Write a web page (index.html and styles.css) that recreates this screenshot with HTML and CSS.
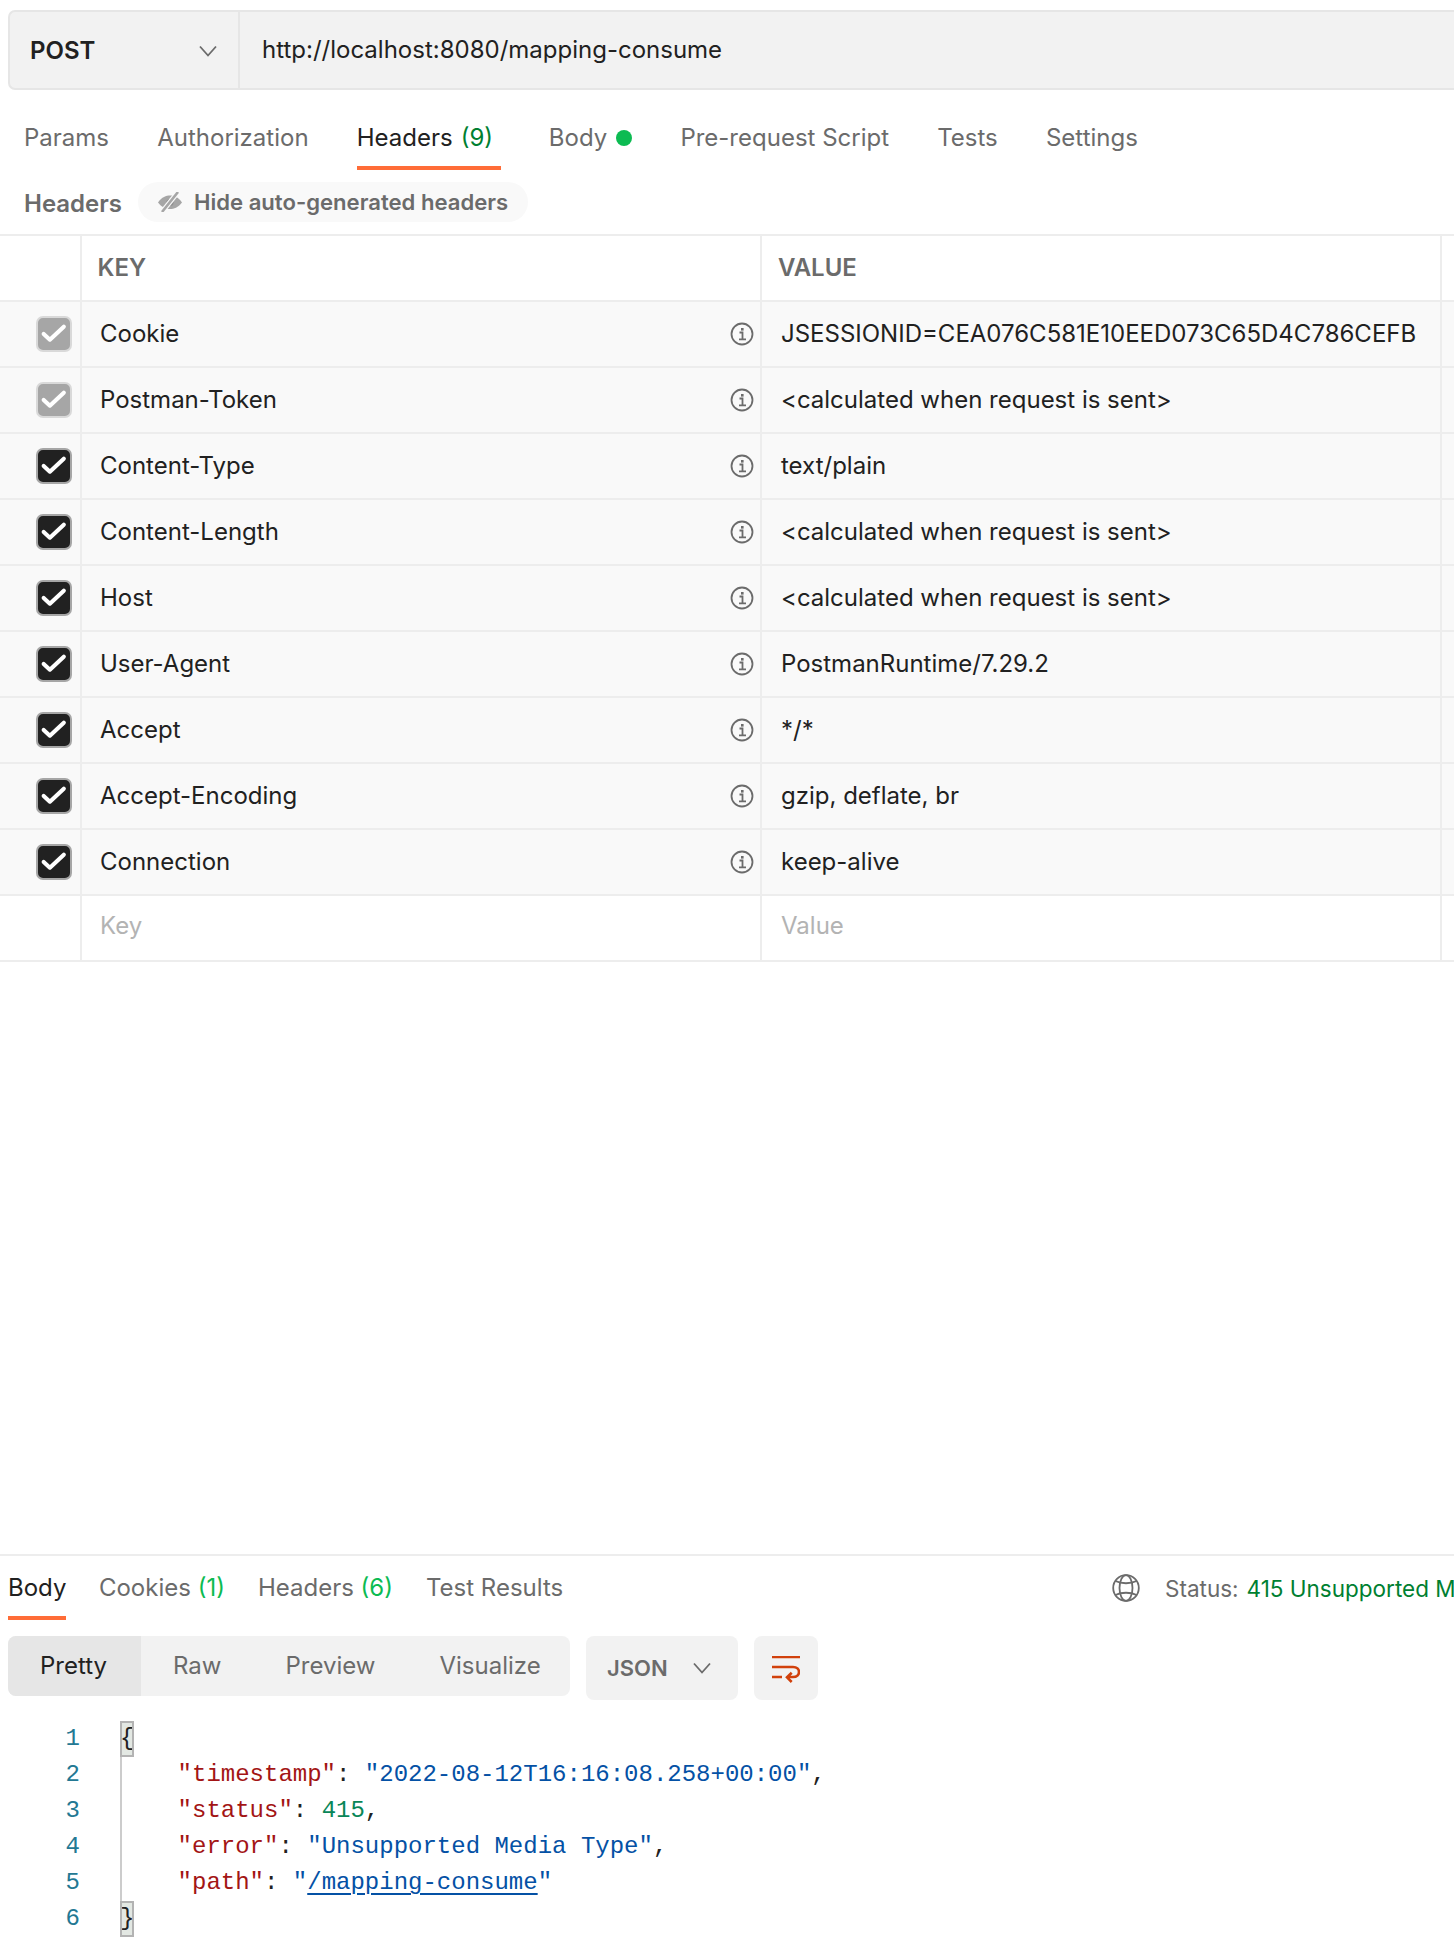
FILE: index.html
```html
<!DOCTYPE html>
<html lang="en">
<head>
<meta charset="utf-8">
<title>Postman request</title>
<link rel="stylesheet" href="styles.css">
</head>
<body>
<div class="app">
  <section class="request">
    <div class="urlbar">
      <div class="method"><span>POST</span>
        <svg class="chev" viewBox="0 0 18 12"><path d="M1 1.5 9 10.5 17 1.5"/></svg>
      </div>
      <div class="url">http://localhost:8080/mapping-consume</div>
    </div>
    <nav class="tabs">
      <div class="tab">Params</div>
      <div class="tab">Authorization</div>
      <div class="tab active">Headers <span class="count">(9)</span></div>
      <div class="tab body-tab">Body <i class="dot"></i></div>
      <div class="tab">Pre-request Script</div>
      <div class="tab">Tests</div>
      <div class="tab">Settings</div>
    </nav>
    <div class="subhead">
      <span class="subtitle">Headers</span>
      <div class="pill">
        <svg class="eye" viewBox="0 0 24 20"><path class="lid" d="M0 10.500C4 5 8 3.500 12 3.500s8 1.500 12 7c-4 5-8 6.500-12 6.500S4 15.500 0 10.500Z"/><circle class="pupil" cx="12" cy="10.500" r="3.600"/><path class="halo" d="M20 0 4 20"/><path class="slash" d="M20 0 4 20"/></svg>
        <span>Hide auto-generated headers</span>
      </div>
    </div>
    <div class="table">
      <div class="row head"><div class="c check"></div><div class="c key">KEY</div><div class="c val">VALUE</div><div class="c rest"></div></div>

      <div class="row filled"><div class="c check"><span class="box off"><svg viewBox="2 2 31 31"><path d="M7.500 17.500 13.500 23 27 10.500"/></svg></span></div><div class="c key"><span>Cookie</span><svg class="info" viewBox="0 0 24 24"><circle cx="12" cy="12" r="10.500"/><path d="M9.500 10.500H12.500V17M9 17.300H16"/><rect x="11" y="6" width="2.600" height="2.600"/></svg></div><div class="c val">JSESSIONID=CEA076C581E10EED073C65D4C786CEFB</div><div class="c rest"></div></div>

      <div class="row filled"><div class="c check"><span class="box off"><svg viewBox="2 2 31 31"><path d="M7.500 17.500 13.500 23 27 10.500"/></svg></span></div><div class="c key"><span>Postman-Token</span><svg class="info" viewBox="0 0 24 24"><circle cx="12" cy="12" r="10.500"/><path d="M9.500 10.500H12.500V17M9 17.300H16"/><rect x="11" y="6" width="2.600" height="2.600"/></svg></div><div class="c val">&lt;calculated when request is sent&gt;</div><div class="c rest"></div></div>

      <div class="row filled"><div class="c check"><span class="box"><svg viewBox="2 2 31 31"><path d="M7.500 17.500 13.500 23 27 10.500"/></svg></span></div><div class="c key"><span>Content-Type</span><svg class="info" viewBox="0 0 24 24"><circle cx="12" cy="12" r="10.500"/><path d="M9.500 10.500H12.500V17M9 17.300H16"/><rect x="11" y="6" width="2.600" height="2.600"/></svg></div><div class="c val">text/plain</div><div class="c rest"></div></div>

      <div class="row filled"><div class="c check"><span class="box"><svg viewBox="2 2 31 31"><path d="M7.500 17.500 13.500 23 27 10.500"/></svg></span></div><div class="c key"><span>Content-Length</span><svg class="info" viewBox="0 0 24 24"><circle cx="12" cy="12" r="10.500"/><path d="M9.500 10.500H12.500V17M9 17.300H16"/><rect x="11" y="6" width="2.600" height="2.600"/></svg></div><div class="c val">&lt;calculated when request is sent&gt;</div><div class="c rest"></div></div>

      <div class="row filled"><div class="c check"><span class="box"><svg viewBox="2 2 31 31"><path d="M7.500 17.500 13.500 23 27 10.500"/></svg></span></div><div class="c key"><span>Host</span><svg class="info" viewBox="0 0 24 24"><circle cx="12" cy="12" r="10.500"/><path d="M9.500 10.500H12.500V17M9 17.300H16"/><rect x="11" y="6" width="2.600" height="2.600"/></svg></div><div class="c val">&lt;calculated when request is sent&gt;</div><div class="c rest"></div></div>

      <div class="row filled"><div class="c check"><span class="box"><svg viewBox="2 2 31 31"><path d="M7.500 17.500 13.500 23 27 10.500"/></svg></span></div><div class="c key"><span>User-Agent</span><svg class="info" viewBox="0 0 24 24"><circle cx="12" cy="12" r="10.500"/><path d="M9.500 10.500H12.500V17M9 17.300H16"/><rect x="11" y="6" width="2.600" height="2.600"/></svg></div><div class="c val">PostmanRuntime/7.29.2</div><div class="c rest"></div></div>

      <div class="row filled"><div class="c check"><span class="box"><svg viewBox="2 2 31 31"><path d="M7.500 17.500 13.500 23 27 10.500"/></svg></span></div><div class="c key"><span>Accept</span><svg class="info" viewBox="0 0 24 24"><circle cx="12" cy="12" r="10.500"/><path d="M9.500 10.500H12.500V17M9 17.300H16"/><rect x="11" y="6" width="2.600" height="2.600"/></svg></div><div class="c val">*/*</div><div class="c rest"></div></div>

      <div class="row filled"><div class="c check"><span class="box"><svg viewBox="2 2 31 31"><path d="M7.500 17.500 13.500 23 27 10.500"/></svg></span></div><div class="c key"><span>Accept-Encoding</span><svg class="info" viewBox="0 0 24 24"><circle cx="12" cy="12" r="10.500"/><path d="M9.500 10.500H12.500V17M9 17.300H16"/><rect x="11" y="6" width="2.600" height="2.600"/></svg></div><div class="c val">gzip, deflate, br</div><div class="c rest"></div></div>

      <div class="row filled"><div class="c check"><span class="box"><svg viewBox="2 2 31 31"><path d="M7.500 17.500 13.500 23 27 10.500"/></svg></span></div><div class="c key"><span>Connection</span><svg class="info" viewBox="0 0 24 24"><circle cx="12" cy="12" r="10.500"/><path d="M9.500 10.500H12.500V17M9 17.300H16"/><rect x="11" y="6" width="2.600" height="2.600"/></svg></div><div class="c val">keep-alive</div><div class="c rest"></div></div>

      <div class="row blank"><div class="c check"></div><div class="c key">Key</div><div class="c val">Value</div><div class="c rest"></div></div>
    </div>
  </section>

  <section class="response">
    <div class="restabs">
      <div class="rtab active">Body</div>
      <div class="rtab">Cookies <span class="count bright">(1)</span></div>
      <div class="rtab">Headers <span class="count bright">(6)</span></div>
      <div class="rtab">Test Results</div>
      <div class="status">
        <svg class="globe" viewBox="0 0 28 28"><circle cx="14" cy="14" r="12.800"/><ellipse cx="14" cy="14" rx="6.500" ry="12.800"/><path d="M3.500 7C9 10 19 10 24.500 7M3.500 21C9 18 19 18 24.500 21"/></svg>
        <span class="stlabel">Status:</span>
        <span class="stvalue">415 Unsupported Media Type</span>
      </div>
    </div>
    <div class="tools">
      <div class="seg">
        <div class="opt on">Pretty</div>
        <div class="opt">Raw</div>
        <div class="opt">Preview</div>
        <div class="opt">Visualize</div>
      </div>
      <div class="lang"><span>JSON</span>
        <svg class="chev" viewBox="0 0 18 12"><path d="M1 1.5 9 10.500 17 1.500"/></svg>
      </div>
      <div class="wrapbtn">
        <svg viewBox="0 0 28 27"><path d="M0 1H28M0 11H21C29 11 29 21 21 21H15M19.700 16.700 15 21.300 19.700 26M0 21H10"/></svg>
      </div>
    </div>
    <div class="code">
      <div class="line"><span class="ln">1</span><span class="src"><span class="brace">{</span></span></div>
      <div class="line"><span class="ln">2</span><span class="src"><span class="guide"></span><span class="k">"timestamp"</span>: <span class="s">"2022-08-12T16:16:08.258+00:00"</span>,</span></div>
      <div class="line"><span class="ln">3</span><span class="src"><span class="guide"></span><span class="k">"status"</span>: <span class="n">415</span>,</span></div>
      <div class="line"><span class="ln">4</span><span class="src"><span class="guide"></span><span class="k">"error"</span>: <span class="s">"Unsupported Media Type"</span>,</span></div>
      <div class="line"><span class="ln">5</span><span class="src"><span class="guide"></span><span class="k">"path"</span>: <span class="s">"<span class="link">/mapping-consume</span>"</span></span></div>
      <div class="line"><span class="ln">6</span><span class="src"><span class="brace">}</span></span></div>
    </div>
  </section>
</div>
</body>
</html>
```
FILE: styles.css
```css
* { box-sizing: border-box; }
html, body { margin: 0; padding: 0; background: #fff; }
body { font-family: Inter, "Noto Sans", sans-serif; font-size: 24px; color: #212121; }
.app { width: 1454px; height: 1954px; overflow: hidden; display: flex; flex-direction: column; }

.request { flex: 1; padding-top: 10px; min-height: 0; }
.urlbar { margin-left: 8px; height: 80px; display: flex; background: #f2f2f2; border: 2px solid #e6e6e6; border-right: 0; border-radius: 7px 0 0 7px; }
.method { width: 230px; flex: none; border-right: 2px solid #e6e6e6; display: flex; align-items: center; justify-content: space-between; padding: 1px 21px 0 20px; font-weight: 600; }
.chev { width: 18px; height: 12px; fill: none; stroke: #6b6b6b; stroke-width: 1.8; }
.url { padding-left: 22px; line-height: 76px; }

.tabs { display: flex; gap: 48.200px; padding-left: 24px; height: 80px; }
.tab { height: 80px; padding-top: 30px; line-height: 36px; color: #6b6b6b; white-space: nowrap; display: flex; gap: 8px; align-items: flex-start; }
.tab.active { color: #212121; border-bottom: 4px solid #ff6c37; padding-right: 7.500px; }
.tab.body-tab { gap: 9px; }
.count { color: #007f31; }
.count.bright { color: #0cbb52; }
.dot { width: 16px; height: 16px; border-radius: 50%; background: #0cbb52; margin-top: 10px; }

.subhead { display: flex; align-items: center; gap: 16px; padding-left: 24px; margin-top: 12px; height: 40px; }
.subtitle { font-weight: 600; color: #6b6b6b; padding-top: 3px; }
.pill { height: 40px; padding: 0 20px; background: #f9f9f9; border-radius: 20px; display: flex; align-items: center; gap: 12px; color: #6b6b6b; font-weight: 600; font-size: 22.1px; }
.eye { width: 24px; height: 20px; flex: none; }
.eye .lid { fill: #a6a6a6; }
.eye .pupil { fill: #8f8f8f; }
.eye .halo { fill: none; stroke: #f9f9f9; stroke-width: 5; }
.eye .slash { fill: none; stroke: #a6a6a6; stroke-width: 2.600; }

.table { margin-top: 12px; border-top: 2px solid #ededed; }
.row { height: 66px; display: grid; grid-template-columns: 82px 680px 680px 1fr; border-bottom: 2px solid #ededed; }
.c { border-right: 2px solid #ededed; display: flex; align-items: center; min-width: 0; white-space: nowrap; }
.rest { border-right: 0; }
.check { justify-content: flex-start; padding-left: 36px; }
.key { padding: 0 6px 2px 18px; justify-content: space-between; }
.val { padding: 0 0 2px 19px; }
.filled { background: #f9f9f9; }
.filled .info { margin-top: 2px; }
.head .c { font-weight: 600; color: #6b6b6b; padding-left: 16px; padding-bottom: 2px; }
.head .check { padding-left: 0; }
.head .key { padding-left: 15.500px; }
.blank .c { color: #b3b3b3; padding-bottom: 5px; }
.box { width: 36px; height: 36px; border-radius: 7px; background: #212121; border: 2px solid #a6a6a6; display: flex; align-items: center; justify-content: center; }
.box.off { background: #a6a6a6; border-color: #d9d9d9; }
.box svg { width: 32px; height: 32px; flex: none; fill: none; stroke: #fff; stroke-width: 4; stroke-linecap: round; stroke-linejoin: round; }
.info { width: 24px; height: 24px; flex: none; fill: none; stroke: #6b6b6b; stroke-width: 1.8; }
.info rect { fill: #6b6b6b; stroke: none; }

.response { height: 400px; flex: none; border-top: 2px solid #ededed; }
.restabs { height: 64px; display: flex; padding-left: 8px; gap: 33px; }
.rtab { height: 64px; line-height: 64px; color: #6b6b6b; white-space: nowrap; }
.rtab.active { color: #212121; border-bottom: 4px solid #ff6c37; margin-right: -0.500px; }
.status { margin-left: auto; width: 342px; flex: none; display: flex; align-items: center; gap: 25px; white-space: nowrap; overflow: hidden; font-size: 22.500px; color: #6b6b6b; }
.globe { width: 28px; height: 28px; flex: none; fill: none; stroke: #6b6b6b; stroke-width: 1.8; }
.stlabel { margin-right: -17px; }
.stvalue { color: #007f31; }

.tools { display: flex; align-items: flex-start; padding: 16px 0 0 8px; height: 80px; }
.seg { height: 60px; width: 562px; display: flex; background: #f2f2f2; border-radius: 8px; overflow: hidden; color: #6b6b6b; line-height: 60px; }
.opt { padding: 0 32px; flex: none; }
.opt.on { background: #e6e6e6; color: #212121; width: 133px; }
.lang { margin-left: 16px; width: 152px; height: 64px; background: #f2f2f2; border-radius: 8px; display: flex; align-items: center; justify-content: space-between; padding: 0 27px 0 21px; color: #6b6b6b; font-weight: 600; font-size: 22px; }
.wrapbtn { margin-left: 16px; width: 64px; height: 64px; background: #f2f2f2; border-radius: 8px; display: flex; align-items: center; justify-content: center; padding-top: 3px; }
.wrapbtn svg { width: 28px; height: 27px; fill: none; stroke: #d1410c; stroke-width: 2.600; }

.code { padding-top: 21px; font-family: "Liberation Mono", "DejaVu Sans Mono", monospace; font-size: 24px; line-height: 36px; }
.line { height: 36px; display: flex; white-space: pre; }
.ln { width: 80px; flex: none; text-align: right; color: #237893; }
.src { margin-left: 40px; display: flex; }
.guide { width: 57.600px; flex: none; border-left: 2px solid #ccc; }
.brace { width: 14px; background: #e3e8e3; border: 2px solid #b3b3b3; line-height: 32px; overflow: hidden; text-indent: -2px; }
.k { color: #a31515; }
.s { color: #0451a5; }
.n { color: #098658; }
.link { text-decoration: underline; text-decoration-thickness: 2px; text-underline-offset: 4px; }
```
